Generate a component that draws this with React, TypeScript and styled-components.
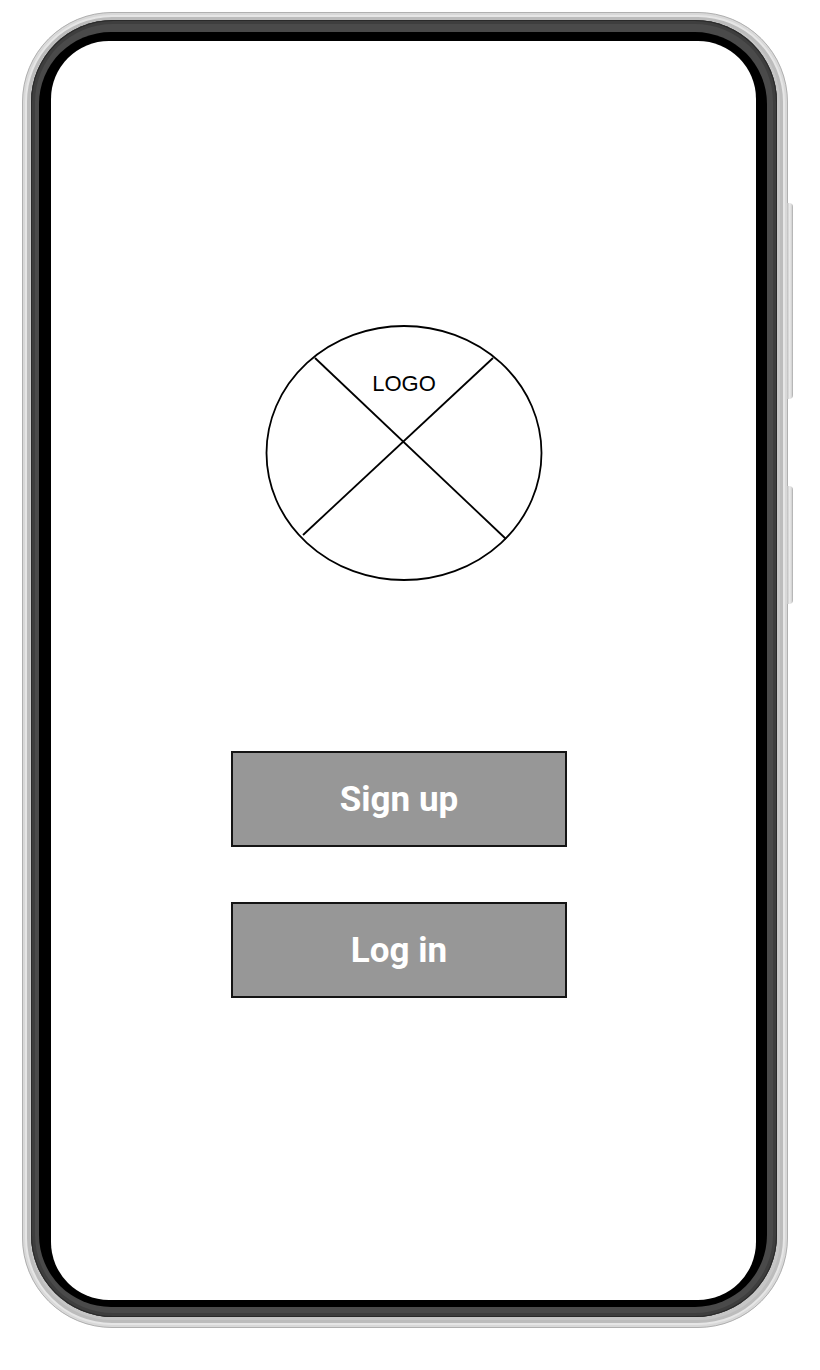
import React from "react";
import styled, { createGlobalStyle } from "styled-components";

const Global = createGlobalStyle`
  html, body { margin: 0; padding: 0; background: #ffffff; }
  body { font-family: "Liberation Sans", Arial, sans-serif; }
`;

const Page = styled.div`
  width: 820px;
  height: 1370px;
  box-sizing: border-box;
  padding: 12px 0 0 22px;
  background: #ffffff;
`;

const Phone = styled.div`
  position: relative;
  box-sizing: border-box;
  width: 766px;
  height: 1316px;
  padding: 7px 10px 10px 8px;
  border-radius: 90px;
  background: #c6c6c6;
  border: 1px solid #b0b0b0;
  box-shadow: inset 0 0 0 2px #d8d8d8, inset 0 0 0 4px #e6e6e6, inset 0 0 0 7px #bcbcbc;
  display: flex;
`;

const Bezel = styled.div`
  flex: 1;
  display: flex;
  padding: 12px 10px 10px 8px;
  border-radius: 82px;
  background: #4a4a4a;
  box-shadow: inset 0 0 0 1px #2a2a2a, inset 0 0 0 4px #3e3e3e;
`;

const Glass = styled.div`
  flex: 1;
  display: flex;
  padding: 9px 11px 7px 12px;
  border-radius: 72px;
  background: #000000;
`;

const Screen = styled.main`
  flex: 1;
  display: flex;
  flex-direction: column;
  align-items: center;
  padding-top: 284px;
  border-radius: 58px;
  background: #ffffff;
`;

const SideKey = styled.div<{ $top: number; $height: number }>`
  position: absolute;
  right: -6px;
  top: ${(p) => p.$top}px;
  width: 6px;
  height: ${(p) => p.$height}px;
  border-radius: 0 4px 4px 0;
  background: linear-gradient(90deg, #bdbdbd 0%, #ececec 45%, #d6d6d6 75%, #a8a8a8 100%);
`;

const LogoLabel = styled.text`
  font-family: "Liberation Sans", Arial, sans-serif;
  font-size: 22px;
  fill: #000000;
`;

const Actions = styled.div`
  margin-top: 168px;
  margin-right: 9px;
  display: flex;
  flex-direction: column;
  gap: 55px;
`;

const ActionButton = styled.button`
  box-sizing: border-box;
  width: 336px;
  height: 96px;
  border: 2px solid #141414;
  background: #979797;
  color: #ffffff;
  font-family: Roboto, "Liberation Sans", Arial, sans-serif;
  font-weight: 700;
  font-size: 35px;
  padding: 0;
  cursor: pointer;
`;

const LogoPlaceholder = () => (
  <svg width="278" height="258" viewBox="0 0 278 258" aria-label="Logo">
    <ellipse cx="139" cy="128" rx="137.5" ry="127" fill="none" stroke="#000" strokeWidth="1.8" />
    <line x1="50" y1="33" x2="241" y2="214" stroke="#000" strokeWidth="1.8" />
    <line x1="228" y1="33" x2="38" y2="210" stroke="#000" strokeWidth="1.8" />
    <LogoLabel x="139" y="66" textAnchor="middle">LOGO</LogoLabel>
  </svg>
);

export default function App() {
  return (
    <Page>
      <Global />
      <Phone>
        <Bezel>
          <Glass>
            <Screen>
              <LogoPlaceholder />
              <Actions>
                <ActionButton>Sign up</ActionButton>
                <ActionButton>Log in</ActionButton>
              </Actions>
            </Screen>
          </Glass>
        </Bezel>
        <SideKey $top={190} $height={196} />
        <SideKey $top={473} $height={118} />
      </Phone>
    </Page>
  );
}
